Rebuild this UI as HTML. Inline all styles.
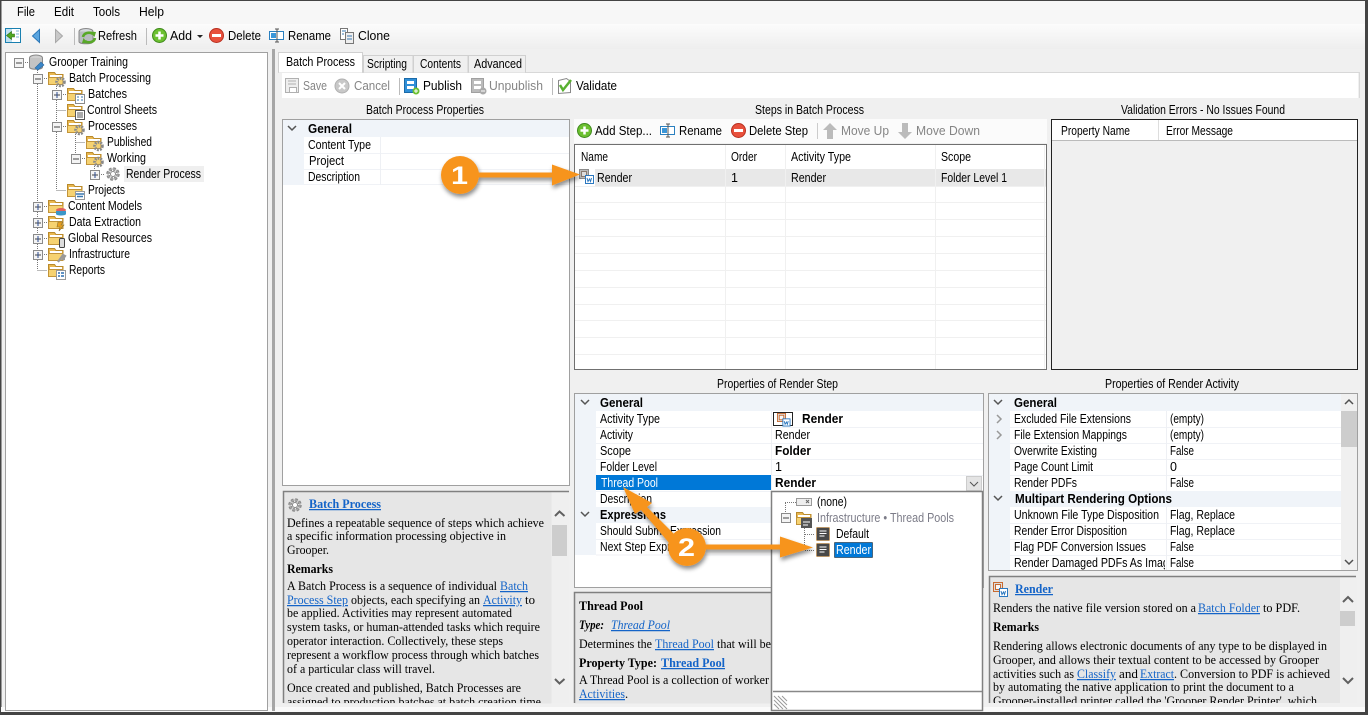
<!DOCTYPE html>
<html><head><meta charset="utf-8"><title>Grooper</title>
<style>
html,body{margin:0;padding:0;background:#f0f0f0;width:1368px;height:715px;overflow:hidden}
svg{display:block;position:absolute;left:0;top:0}
text{font-family:"Liberation Sans",sans-serif;font-size:12.5px;fill:#000;white-space:pre}
.b{font-weight:bold;fill:#000}
.g{fill:#858585}
.s{font-family:"Liberation Serif",serif;font-size:12.5px;fill:#000}
.sb{font-family:"Liberation Serif",serif;font-size:12.5px;font-weight:bold;fill:#000}
.l{font-family:"Liberation Serif",serif;font-size:12.5px;fill:#1464c8;text-decoration:underline}
.lb{font-family:"Liberation Serif",serif;font-size:12.5px;font-weight:bold;fill:#1464c8;text-decoration:underline}
.li{font-family:"Liberation Serif",serif;font-size:12.5px;font-style:italic;fill:#1464c8;text-decoration:underline}
.n{font-size:25px;font-weight:bold;fill:#fff}
</style></head><body>
<svg width="1368" height="715" viewBox="0 0 1368 715" xmlns="http://www.w3.org/2000/svg">
<defs>
<linearGradient id="tb" x1="0" y1="0" x2="0" y2="1"><stop offset="0" stop-color="#fcfcfc"/><stop offset="1" stop-color="#eeeeee"/></linearGradient>
<filter id="ds" x="-30%" y="-30%" width="170%" height="170%"><feDropShadow dx="1" dy="3" stdDeviation="2" flood-color="#000" flood-opacity=".45"/></filter>
<clipPath id="c1"><rect x="284" y="492" width="268" height="211"/></clipPath>
<clipPath id="c2"><rect x="990" y="577" width="350" height="126"/></clipPath>
<clipPath id="c3"><rect x="1012" y="555" width="153" height="15"/></clipPath>
<g id="fold"><path d="M.5 3.5V1.500h6l1.500 2h7v3h-14.500z" fill="#e9b850" stroke="#b98a2c"/><rect x="2" y="4" width="12" height="5" fill="#fff"/><path d="M.5 13.500V6.500h14.500v7z" fill="#f6d271" stroke="#c2943a"/></g>
<g id="fo1"><use href="#fold"/><circle cx="12.500" cy="11" r="3.800" fill="none" stroke="#8a8a8a" stroke-width="3" stroke-dasharray="1.800 1"/></g>
<g id="fo2"><use href="#fold"/><rect x="8.500" y="7.500" width="9" height="9" fill="#fff" stroke="#8a8a8a"/><path d="M10 10h2M14 10h2M10 13h2M14 13h2" stroke="#3a78b0"/></g>
<g id="fo3"><use href="#fold"/><rect x="8.500" y="7.500" width="9" height="9" fill="#fff" stroke="#555"/><path d="M10 10h6M10 12h6M10 14h6" stroke="#555"/></g>
<g id="fo4"><use href="#fold"/><rect x="8.500" y="8.500" width="9" height="8" fill="#fff" stroke="#999"/><path d="M9 11h8M10 13.500h6" stroke="#3a78b0" stroke-width="1.500"/></g>
<g id="fo5"><use href="#fold"/><ellipse cx="13" cy="11" rx="5" ry="2" fill="#e06060"/><path d="M8 12v3c0 2 10 2 10 0v-3" fill="#3a96c8"/></g>
<g id="fo6"><use href="#fold"/><path d="M10 7l5 0-2 3h3l-5 6 1-4h-3z" fill="#e8a020" stroke="#8a7030" stroke-width=".6"/></g>
<g id="fo7"><use href="#fold"/><rect x="11.500" y="7.500" width="5" height="9" rx="1" fill="#ddd" stroke="#444"/></g>
<g id="fo8"><use href="#fold"/><path d="M10 15l5-7 2 1-2 3 2 0" fill="none" stroke="#999" stroke-width="2.200"/></g>
<g id="fo9"><use href="#fold"/><rect x="8.500" y="7.500" width="9" height="9" fill="#fff" stroke="#999"/><path d="M10 10h2M13 10h3M10 13h2M13 13h3" stroke="#2b6fb0" stroke-width="1.500"/></g>
<g id="pm"><rect x=".5" y=".5" width="9" height="9" fill="#f4f4f4" stroke="#8a8a8a"/><path d="M2 5h6" stroke="#444"/></g>
<g id="pp"><use href="#pm"/><path d="M5 2v6" stroke="#2a4a90"/></g>
<g id="gear"><circle cx="8" cy="8" r="5" fill="none" stroke="#8a8a8a" stroke-width="3.500" stroke-dasharray="2.400 1.530"/><circle cx="8" cy="8" r="5" fill="none" stroke="#aaa" stroke-width="1"/><circle cx="8" cy="8" r="2.500" fill="#fff" stroke="#888"/></g>
<g id="add"><circle cx="7.500" cy="7.500" r="7" fill="#6cc030" stroke="#3f8a1c"/><path d="M7.500 3.500v8M3.500 7.500h8" stroke="#fff" stroke-width="2.500"/></g>
<g id="del"><circle cx="7.500" cy="7.500" r="7" fill="#e8503c" stroke="#b83020"/><path d="M3 7.500h9" stroke="#fff" stroke-width="3"/></g>
<g id="ren"><rect x=".5" y="3.500" width="14" height="8" fill="#fff" stroke="#2a80c0"/><rect x="2" y="5" width="5" height="5" fill="#3a96d8"/><path d="M8 1v13M6 1h4M6 14h4" stroke="#555" fill="none"/></g>
<g id="cpu"><rect x=".5" y=".5" width="13" height="13" fill="#484848" stroke="#d08a30" stroke-dasharray="1 1"/><path d="M3.500 4h7M3.500 6.500h7M3.500 9h5" stroke="#fff"/></g>
<g id="rnd"><rect x=".5" y=".5" width="9" height="9" fill="#ddd" stroke="#c86a30"/><rect x="2.500" y="2.500" width="5" height="5" fill="#f7f7f7" stroke="#c86a30"/><rect x="6.500" y="6.500" width="8" height="8" fill="#fff" stroke="#2b78c0"/><path d="M8 9l1 3.500 1.500-2.500 1 2.500 1-3.500" fill="none" stroke="#2b78c0"/></g>
<g id="rng"><rect x=".5" y=".5" width="9" height="9" fill="#bbb" stroke="#8a8a8a"/><rect x="2.500" y="2.500" width="5" height="5" fill="#ddd" stroke="#8a7a70"/><rect x="6.500" y="6.500" width="8" height="8" fill="#fff" stroke="#2b78c0"/><path d="M8 9l1 3.500 1.500-2.500 1 2.500 1-3.500" fill="none" stroke="#2b78c0"/></g>
</defs>

<!-- frame -->
<rect width="1368" height="715" fill="#f0f0f0"/>
<rect x="1" y="1" width="1364" height="23" fill="#f7f7f7"/>
<rect x="1" y="24" width="1364" height="25" fill="url(#tb)"/>
<rect y="0" width="1368" height="1" fill="#444"/>
<rect x="0" y="0" width="1.500" height="715" fill="#444"/>
<rect x="1365" y="0" width="3" height="715" fill="#444"/>
<rect y="712" width="1368" height="3" fill="#444"/>
<rect x="1" y="707" width="1364" height="5" fill="#fafafa"/>

<!-- menu -->
<text x="17" y="16" textLength="18" lengthAdjust="spacingAndGlyphs">File</text>
<text x="54" y="16" textLength="20" lengthAdjust="spacingAndGlyphs">Edit</text>
<text x="93" y="16" textLength="27" lengthAdjust="spacingAndGlyphs">Tools</text>
<text x="139" y="16" textLength="25" lengthAdjust="spacingAndGlyphs">Help</text>

<!-- main toolbar -->
<rect x="5.500" y="28.500" width="15" height="14" fill="#fff" stroke="#1a80b0"/><rect x="6" y="29" width="6" height="13" fill="#bfe0f0"/><path d="M6.500 35.500l5-4v2.500h3v3h-3v2.500z" fill="#50a820" stroke="#2c7010" stroke-width=".6"/><path d="M16 31h3M16 34h3M16 37h3" stroke="#7ab0d0"/>
<path d="M39.500 29.500v13l-7-6.500z" fill="#5aa5e0" stroke="#2c78b8"/>
<path d="M55.500 29.500v13l7-6.500z" fill="#c8c8c8" stroke="#a8a8a8"/>
<rect x="74" y="28" width="1" height="17" fill="#bbb"/>
<ellipse cx="86" cy="31.500" rx="7" ry="3" fill="#d4d8dc" stroke="#888"/><path d="M79 31.500v10c0 3 14 3 14 0v-10" fill="#b8bcc0" stroke="#888"/>
<path d="M83 37a6 5 0 0 1 10-3" fill="none" stroke="#58a828" stroke-width="2.600"/><path d="M90 31.500l6 .5-1.500 5z" fill="#58a828"/>
<path d="M95 38a6 5 0 0 1-10 3" fill="none" stroke="#58a828" stroke-width="2.600"/><path d="M88 43.500l-6-.5 1.500-5z" fill="#58a828"/>
<text x="98" y="40" textLength="39" lengthAdjust="spacingAndGlyphs">Refresh</text>
<rect x="146" y="28" width="1" height="17" fill="#bbb"/>
<use href="#add" x="152" y="28"/>
<text x="170" y="40" textLength="22" lengthAdjust="spacingAndGlyphs">Add</text>
<path d="M197 35h6l-3 3z" fill="#222"/>
<use href="#del" x="209" y="28"/>
<text x="228" y="40" textLength="33" lengthAdjust="spacingAndGlyphs">Delete</text>
<use href="#ren" x="269" y="28"/>
<text x="288" y="40" textLength="43" lengthAdjust="spacingAndGlyphs">Rename</text>
<rect x="340.500" y="28.500" width="7" height="11" fill="#fff" stroke="#777"/><rect x="345.500" y="32.500" width="8" height="11" fill="#eee" stroke="#777"/><path d="M342 31h4M342 34h2M347 36h5M347 39h5" stroke="#3a78b0"/>
<text x="358" y="40" textLength="32" lengthAdjust="spacingAndGlyphs">Clone</text>

<!-- tree panel -->
<rect x="5.500" y="52.500" width="262" height="658" fill="#fff" stroke="#a0a0a0"/>
<rect x="272" y="49" width="3" height="662" fill="#a6a6a6"/>
<g stroke="#777" stroke-dasharray="1 1" fill="none">
<path d="M23 62.500h6M37.500 68v202M42 78.500h6M42 206.500h6M42 222.500h6M42 238.500h6M42 254.500h6M37.500 270.500h10M56.500 84v106M61 94.500h6M56.500 110.500h10M61 126.500h6M56.500 190.500h10M75.500 132v26M75.500 142.500h10M80 158.500h6M94.500 164v10M99 174.500h5"/>
</g>
<use href="#pm" x="14" y="58"/><use href="#pm" x="33" y="74"/><use href="#pp" x="52" y="90"/><use href="#pm" x="52" y="122"/><use href="#pm" x="71" y="154"/><use href="#pp" x="90" y="170"/>
<use href="#pp" x="33" y="202"/><use href="#pp" x="33" y="218"/><use href="#pp" x="33" y="234"/><use href="#pp" x="33" y="250"/>
<ellipse cx="36" cy="58" rx="6.500" ry="3" fill="#d0d0d0" stroke="#888"/><path d="M29.500 58v9c0 3 13 3 13 0v-9" fill="#c4c4c4" stroke="#888"/><path d="M35 68l6-6 3 3-6 5z" fill="#3a86c8" stroke="#2a68a0" stroke-width=".6"/>
<use href="#fo1" x="48" y="71"/><use href="#fo2" x="67" y="87"/><use href="#fo3" x="67" y="103"/><use href="#fo1" x="67" y="119"/><use href="#fo1" x="86" y="135"/><use href="#fo1" x="86" y="151"/><use href="#gear" x="105" y="166"/><use href="#fo4" x="67" y="183"/>
<use href="#fo5" x="48" y="199"/><use href="#fo6" x="48" y="215"/><use href="#fo7" x="48" y="231"/><use href="#fo8" x="48" y="247"/><use href="#fo9" x="48" y="263"/>
<rect x="124" y="166" width="80" height="16" fill="#efefef"/>
<text x="49" y="66" textLength="79" lengthAdjust="spacingAndGlyphs">Grooper Training</text>
<text x="69" y="82" textLength="82" lengthAdjust="spacingAndGlyphs">Batch Processing</text>
<text x="88" y="98" textLength="39" lengthAdjust="spacingAndGlyphs">Batches</text>
<text x="87" y="114" textLength="70" lengthAdjust="spacingAndGlyphs">Control Sheets</text>
<text x="88" y="130" textLength="49" lengthAdjust="spacingAndGlyphs">Processes</text>
<text x="107" y="146" textLength="45" lengthAdjust="spacingAndGlyphs">Published</text>
<text x="107" y="162" textLength="39" lengthAdjust="spacingAndGlyphs">Working</text>
<text x="126" y="178" textLength="75" lengthAdjust="spacingAndGlyphs">Render Process</text>
<text x="88" y="194" textLength="37" lengthAdjust="spacingAndGlyphs">Projects</text>
<text x="68" y="210" textLength="74" lengthAdjust="spacingAndGlyphs">Content Models</text>
<text x="69" y="226" textLength="72" lengthAdjust="spacingAndGlyphs">Data Extraction</text>
<text x="68" y="242" textLength="84" lengthAdjust="spacingAndGlyphs">Global Resources</text>
<text x="69" y="258" textLength="61" lengthAdjust="spacingAndGlyphs">Infrastructure</text>
<text x="69" y="274" textLength="36" lengthAdjust="spacingAndGlyphs">Reports</text>

<!-- tabs -->
<rect x="278" y="72" width="1081" height="1" fill="#d8d8d8"/>
<rect x="1359" y="72" width="1" height="26" fill="#d8d8d8"/>
<rect x="282" y="73" width="1076" height="25" fill="#fff"/>
<path d="M278.500 72.500v-20h84v20" fill="#fff" stroke="#d0d0d0"/>
<path d="M363.500 72.500v-17h49.500v17M413.500 72.500v-17h54.500v17M468.500 72.500v-17h57v17" fill="#f0f0f0" stroke="#d0d0d0"/>
<text x="286" y="66" textLength="69" lengthAdjust="spacingAndGlyphs">Batch Process</text>
<text x="367" y="68" textLength="40" lengthAdjust="spacingAndGlyphs">Scripting</text>
<text x="420" y="68" textLength="41" lengthAdjust="spacingAndGlyphs">Contents</text>
<text x="474" y="68" textLength="48" lengthAdjust="spacingAndGlyphs">Advanced</text>

<!-- process toolbar -->
<rect x="285.500" y="78.500" width="13" height="14" fill="#eee" stroke="#b0b0b0"/><path d="M288 81h8M288 84h8" stroke="#b0b0b0"/><rect x="289.500" y="87.500" width="7" height="5" fill="#fff" stroke="#b0b0b0"/>
<text class="g" x="303" y="90" textLength="24" lengthAdjust="spacingAndGlyphs">Save</text>
<circle cx="342" cy="86" r="7" fill="#c8c8c8" stroke="#b0b0b0"/><path d="M339 83l6 6M345 83l-6 6" stroke="#fff" stroke-width="2"/>
<text class="g" x="354" y="90" textLength="36" lengthAdjust="spacingAndGlyphs">Cancel</text>
<rect x="399" y="78" width="1" height="17" fill="#bbb"/>
<rect x="404.500" y="78.500" width="12" height="14" fill="#2f8fd8" stroke="#1b6aa8"/><rect x="407" y="81" width="7" height="3" fill="#fff"/><rect x="407" y="86" width="7" height="3" fill="#fff"/><circle cx="416" cy="91" r="3.500" fill="#6cc030"/><path d="M416 89v4M414 91h4" stroke="#fff"/>
<text x="423" y="90" textLength="39" lengthAdjust="spacingAndGlyphs">Publish</text>
<rect x="471.500" y="78.500" width="12" height="14" fill="#bbb" stroke="#a0a0a0"/><rect x="474" y="81" width="7" height="3" fill="#fff"/><rect x="474" y="86" width="7" height="3" fill="#fff"/><circle cx="483" cy="91" r="3.500" fill="#aaa"/><path d="M481 91h4" stroke="#fff"/>
<text class="g" x="489" y="90" textLength="54" lengthAdjust="spacingAndGlyphs">Unpublish</text>
<rect x="552" y="78" width="1" height="17" fill="#bbb"/>
<path d="M558.500 80.500l8-2 4 3v11l-12 1z" fill="#fff" stroke="#888"/><path d="M560 85l3 5 8-10" fill="none" stroke="#58b030" stroke-width="2.500"/>
<text x="576" y="90" textLength="41" lengthAdjust="spacingAndGlyphs">Validate</text>

<!-- headings -->
<text x="366" y="114" textLength="118" lengthAdjust="spacingAndGlyphs">Batch Process Properties</text>
<text x="755" y="114" textLength="109" lengthAdjust="spacingAndGlyphs">Steps in Batch Process</text>
<text x="1121" y="114" textLength="164" lengthAdjust="spacingAndGlyphs">Validation Errors - No Issues Found</text>
<text x="717" y="388" textLength="121" lengthAdjust="spacingAndGlyphs">Properties of Render Step</text>
<text x="1105" y="388" textLength="134" lengthAdjust="spacingAndGlyphs">Properties of Render Activity</text>

<!-- left property grid -->
<rect x="282.500" y="119.500" width="287" height="366" fill="#fff" stroke="#a0a0a0"/>
<rect x="283" y="120" width="286" height="17" fill="#f0f4f9"/>
<rect x="283" y="137" width="21" height="48" fill="#f0f4f9"/>
<path d="M304 153.500h265M304 169.500h265M304 184.500h265" stroke="#f0f2f6"/>
<path d="M380.500 137v48" stroke="#eef0f4"/>
<path d="M288 126l4 4 4-4" fill="none" stroke="#555" stroke-width="1.500"/>
<text class="b" x="308" y="133" textLength="44" lengthAdjust="spacingAndGlyphs">General</text>
<text x="308" y="149" textLength="63" lengthAdjust="spacingAndGlyphs">Content Type</text>
<text x="309" y="165" textLength="35" lengthAdjust="spacingAndGlyphs">Project</text>
<text x="308" y="181" textLength="52" lengthAdjust="spacingAndGlyphs">Description</text>

<!-- left help -->
<rect x="283" y="491" width="286" height="212" fill="#efefef"/>
<rect x="283.500" y="491.500" width="268" height="212" fill="#e6e6e6"/>
<path d="M283.500 703V491.500H569" fill="none" stroke="#808080" stroke-width="1.500"/>
<rect x="552" y="525" width="15" height="31" fill="#cdcdcd"/>
<path d="M555 516l4.500-4.500 5 4.500M555 679l4.500 4.500 5-4.500" fill="none" stroke="#606060" stroke-width="2"/>
<use href="#gear" x="287" y="497"/>
<g clip-path="url(#c1)">
<text class="lb" x="309" y="508" textLength="72" lengthAdjust="spacingAndGlyphs">Batch Process</text>
<text class="s" x="287" y="527" textLength="257" lengthAdjust="spacingAndGlyphs">Defines a repeatable sequence of steps which achieve</text>
<text class="s" x="287" y="540" textLength="219" lengthAdjust="spacingAndGlyphs">a specific information processing objective in</text>
<text class="s" x="287" y="554" textLength="42" lengthAdjust="spacingAndGlyphs">Grooper.</text>
<text class="sb" x="287" y="573" textLength="46" lengthAdjust="spacingAndGlyphs">Remarks</text>
<text class="s" x="287" y="590" textLength="210" lengthAdjust="spacingAndGlyphs">A Batch Process is a sequence of individual</text>
<text class="l" x="500" y="590" textLength="28" lengthAdjust="spacingAndGlyphs">Batch</text>
<text class="l" x="287" y="604" textLength="61" lengthAdjust="spacingAndGlyphs">Process Step</text>
<text class="s" x="351" y="604" textLength="129" lengthAdjust="spacingAndGlyphs">objects, each specifying an</text>
<text class="l" x="483" y="604" textLength="39" lengthAdjust="spacingAndGlyphs">Activity</text>
<text class="s" x="525" y="604" textLength="10" lengthAdjust="spacingAndGlyphs">to</text>
<text class="s" x="287" y="617" textLength="225" lengthAdjust="spacingAndGlyphs">be applied. Activities may represent automated</text>
<text class="s" x="287" y="631" textLength="253" lengthAdjust="spacingAndGlyphs">system tasks, or human-attended tasks which require</text>
<text class="s" x="287" y="645" textLength="216" lengthAdjust="spacingAndGlyphs">operator interaction. Collectively, these steps</text>
<text class="s" x="287" y="659" textLength="252" lengthAdjust="spacingAndGlyphs">represent a workflow process through which batches</text>
<text class="s" x="287" y="673" textLength="148" lengthAdjust="spacingAndGlyphs">of a particular class will travel.</text>
<text class="s" x="287" y="692" textLength="234" lengthAdjust="spacingAndGlyphs">Once created and published, Batch Processes are</text>
<text class="s" x="287" y="706" textLength="254" lengthAdjust="spacingAndGlyphs">assigned to production batches at batch creation time</text>
</g>

<!-- steps toolbar -->
<rect x="574" y="119" width="473" height="24" fill="#fbfbfb"/>
<use href="#add" x="577" y="123"/>
<text x="595" y="135" textLength="57" lengthAdjust="spacingAndGlyphs">Add Step...</text>
<use href="#ren" x="660" y="123"/>
<text x="679" y="135" textLength="43" lengthAdjust="spacingAndGlyphs">Rename</text>
<use href="#del" x="731" y="123"/>
<text x="749" y="135" textLength="59" lengthAdjust="spacingAndGlyphs">Delete Step</text>
<rect x="817" y="123" width="1" height="16" fill="#ccc"/>
<path d="M830 123l7 7h-4v9h-6v-9h-4z" fill="#bbb"/>
<text class="g" x="841" y="135" textLength="48" lengthAdjust="spacingAndGlyphs">Move Up</text>
<path d="M905 139l7-7h-4v-9h-6v9h-4z" fill="#bbb"/>
<text class="g" x="916" y="135" textLength="64" lengthAdjust="spacingAndGlyphs">Move Down</text>

<!-- steps list -->
<rect x="574.500" y="144.500" width="472" height="225" fill="#fff" stroke="#707070"/>
<rect x="575" y="169" width="471" height="17" fill="#e8e8e8"/>
<path d="M575 186.500h471M575 202.500h471M575 219.500h471M575 236.500h471M575 253.500h471M575 270.500h471M575 287.500h471M575 304.500h471M575 320.500h471M575 337.500h471M575 354.500h471" stroke="#f0f0f0"/>
<path d="M725.500 145v224M785.500 145v224M935.500 145v224M1044.500 145v224" stroke="#f0f0f0"/>
<rect x="575" y="169" width="20" height="17" fill="#fff"/>
<use href="#rng" x="579" y="169"/>
<text x="581" y="161" textLength="27" lengthAdjust="spacingAndGlyphs">Name</text>
<text x="731" y="161" textLength="26" lengthAdjust="spacingAndGlyphs">Order</text>
<text x="791" y="161" textLength="60" lengthAdjust="spacingAndGlyphs">Activity Type</text>
<text x="941" y="161" textLength="30" lengthAdjust="spacingAndGlyphs">Scope</text>
<text x="597" y="182" textLength="35" lengthAdjust="spacingAndGlyphs">Render</text>
<text x="731" y="182">1</text>
<text x="791" y="182" textLength="35" lengthAdjust="spacingAndGlyphs">Render</text>
<text x="941" y="182" textLength="66" lengthAdjust="spacingAndGlyphs">Folder Level 1</text>

<!-- validation -->
<rect x="1051.500" y="119.500" width="306" height="250" fill="#f0f0f0" stroke="#222"/>
<rect x="1052" y="120" width="305" height="20" fill="#fff"/>
<path d="M1052 140.500h305" stroke="#bbb"/><path d="M1158.500 120v20" stroke="#ddd"/>
<text x="1061" y="135" textLength="69" lengthAdjust="spacingAndGlyphs">Property Name</text>
<text x="1166" y="135" textLength="67" lengthAdjust="spacingAndGlyphs">Error Message</text>

<!-- render step grid -->
<rect x="574.500" y="393.500" width="409" height="194" fill="#fff" stroke="#a0a0a0"/>
<rect x="575" y="394" width="408" height="17" fill="#f0f4f9"/>
<rect x="575" y="411" width="21" height="96" fill="#f0f4f9"/>
<rect x="575" y="507" width="408" height="16" fill="#f0f4f9"/>
<rect x="575" y="523" width="21" height="32" fill="#f0f4f9"/>
<path d="M596 427.500h387M596 443.500h387M596 459.500h387M596 475.500h387M596 491.500h387M596 539.500h175M596 555h175" stroke="#f0f2f6"/>
<path d="M771.500 411v96M771.500 523v32" stroke="#eef0f4"/>
<path d="M581 400l4 4 4-4M581 512l4 4 4-4" fill="none" stroke="#555" stroke-width="1.500"/>
<rect x="596" y="475" width="175" height="15" fill="#0078d7"/>
<text class="b" x="600" y="407" textLength="43" lengthAdjust="spacingAndGlyphs">General</text>
<text x="600" y="423" textLength="60" lengthAdjust="spacingAndGlyphs">Activity Type</text>
<text x="600" y="439" textLength="33" lengthAdjust="spacingAndGlyphs">Activity</text>
<text x="600" y="455" textLength="31" lengthAdjust="spacingAndGlyphs">Scope</text>
<text x="600" y="471" textLength="57" lengthAdjust="spacingAndGlyphs">Folder Level</text>
<text x="601" y="487" textLength="57" lengthAdjust="spacingAndGlyphs" style="fill:#fff">Thread Pool</text>
<text x="600" y="503" textLength="52" lengthAdjust="spacingAndGlyphs">Description</text>
<text class="b" x="600" y="519" textLength="66" lengthAdjust="spacingAndGlyphs">Expressions</text>
<text x="600" y="535" textLength="121" lengthAdjust="spacingAndGlyphs">Should Submit Expression</text>
<text x="600" y="551" textLength="101" lengthAdjust="spacingAndGlyphs">Next Step Expression</text>
<rect x="773.500" y="412.500" width="19" height="13" fill="#fff" stroke="#222"/>
<use href="#rnd" x="777" y="413" transform="translate(77.700 41.300) scale(.9)"/>
<text class="b" x="802" y="423" textLength="41" lengthAdjust="spacingAndGlyphs">Render</text>
<text x="775" y="439" textLength="35" lengthAdjust="spacingAndGlyphs">Render</text>
<text class="b" x="775" y="455" textLength="36" lengthAdjust="spacingAndGlyphs">Folder</text>
<text x="775" y="471">1</text>
<text class="b" x="775" y="487" textLength="41" lengthAdjust="spacingAndGlyphs">Render</text>
<rect x="966.500" y="476.500" width="15" height="14" fill="#e4e4e4" stroke="#ccc"/>
<path d="M970 482l4 4 4-4" fill="none" stroke="#555"/>

<!-- thread help -->
<rect x="574.500" y="592.500" width="210" height="111" fill="#e6e6e6"/>
<path d="M574.500 703V592.500H785" fill="none" stroke="#808080" stroke-width="1.500"/>
<text class="sb" x="579" y="610" textLength="64" lengthAdjust="spacingAndGlyphs">Thread Pool</text>
<text class="sb" x="579" y="629" textLength="25" lengthAdjust="spacingAndGlyphs" style="font-style:italic">Type:</text>
<text class="li" x="611" y="629" textLength="59" lengthAdjust="spacingAndGlyphs">Thread Pool</text>
<text class="s" x="579" y="648" textLength="73" lengthAdjust="spacingAndGlyphs">Determines the</text>
<text class="l" x="655" y="648" textLength="59" lengthAdjust="spacingAndGlyphs">Thread Pool</text>
<text class="s" x="717" y="648" textLength="54" lengthAdjust="spacingAndGlyphs">that will be</text>
<text class="sb" x="579" y="667" textLength="78" lengthAdjust="spacingAndGlyphs">Property Type:</text>
<text class="lb" x="661" y="667" textLength="64" lengthAdjust="spacingAndGlyphs">Thread Pool</text>
<text class="s" x="579" y="684" textLength="190" lengthAdjust="spacingAndGlyphs">A Thread Pool is a collection of worker</text>
<text class="l" x="579" y="698" textLength="46" lengthAdjust="spacingAndGlyphs">Activities</text>
<text class="s" x="625" y="698">.</text>

<!-- dropdown popup -->
<rect x="771.500" y="491.500" width="211" height="219" fill="#fff" stroke="#808080" stroke-width="1.500"/>
<path d="M773 691.500h209" stroke="#888" stroke-width="1.500"/>
<path d="M774 696l13 13M774 700l9 9M774 704l5 5M778 696l9 9M782 696l5 5" stroke="#999"/>
<g stroke="#777" stroke-dasharray="1 1" fill="none"><path d="M785 502.500h11M785.500 503v11M804.500 524v26M805 534.500h10M805 550.500h10"/></g>
<rect x="796.500" y="498.500" width="15" height="7" fill="#eee" stroke="#999"/><path d="M806 500l3 3M809 500l-3 3" stroke="#666"/>
<use href="#pm" x="781" y="513"/>
<use href="#fold" x="796" y="511"/><rect x="801" y="518" width="11" height="10" fill="#555"/><path d="M803 522h7M803 525h5" stroke="#fff"/>
<use href="#cpu" x="816" y="527"/><use href="#cpu" x="816" y="543"/>
<rect x="834.500" y="542.500" width="38" height="15" fill="#0078d7" stroke="#111" stroke-dasharray="1 1"/>
<text x="817" y="506" textLength="30" lengthAdjust="spacingAndGlyphs">(none)</text>
<text x="817" y="522" textLength="137" lengthAdjust="spacingAndGlyphs" style="fill:#7c7c88">Infrastructure • Thread Pools</text>
<text x="836" y="538" textLength="33" lengthAdjust="spacingAndGlyphs">Default</text>
<text x="836" y="554" textLength="35" lengthAdjust="spacingAndGlyphs" style="fill:#fff">Render</text>

<!-- render activity grid -->
<rect x="988.500" y="393.500" width="369" height="177" fill="#fff" stroke="#a0a0a0"/>
<rect x="989" y="394" width="352" height="17" fill="#f0f4f9"/>
<rect x="989" y="411" width="21" height="159" fill="#f0f4f9"/>
<rect x="989" y="491" width="352" height="16" fill="#f0f4f9"/>
<path d="M1010 427.500h331M1010 443.500h331M1010 459.500h331M1010 475.500h331M1010 523.500h331M1010 539.500h331M1010 555.500h331" stroke="#f0f2f6"/>
<path d="M1166.500 411v80M1166.500 507v63" stroke="#eef0f4"/>
<rect x="1341" y="394" width="16" height="176" fill="#f0f0f0"/>
<rect x="1341" y="411" width="16" height="36" fill="#cdcdcd"/>
<path d="M1345 404l4-4 4 4M1345 560l4 4 4-4" fill="none" stroke="#505050" stroke-width="1.500"/>
<path d="M994 400l4 4 4-4M994 496l4 4 4-4" fill="none" stroke="#555" stroke-width="1.500"/>
<path d="M997 415l4 4-4 4M997 431l4 4-4 4" fill="none" stroke="#999" stroke-width="1.500"/>
<text class="b" x="1014" y="407" textLength="43" lengthAdjust="spacingAndGlyphs">General</text>
<text x="1014" y="423" textLength="117" lengthAdjust="spacingAndGlyphs">Excluded File Extensions</text>
<text x="1014" y="439" textLength="113" lengthAdjust="spacingAndGlyphs">File Extension Mappings</text>
<text x="1014" y="455" textLength="83" lengthAdjust="spacingAndGlyphs">Overwrite Existing</text>
<text x="1014" y="471" textLength="79" lengthAdjust="spacingAndGlyphs">Page Count Limit</text>
<text x="1014" y="487" textLength="63" lengthAdjust="spacingAndGlyphs">Render PDFs</text>
<text class="b" x="1015" y="503" textLength="157" lengthAdjust="spacingAndGlyphs">Multipart Rendering Options</text>
<text x="1014" y="519" textLength="145" lengthAdjust="spacingAndGlyphs">Unknown File Type Disposition</text>
<text x="1014" y="535" textLength="113" lengthAdjust="spacingAndGlyphs">Render Error Disposition</text>
<text x="1014" y="551" textLength="132" lengthAdjust="spacingAndGlyphs">Flag PDF Conversion Issues</text>
<g clip-path="url(#c3)"><text x="1014" y="567" textLength="166" lengthAdjust="spacingAndGlyphs">Render Damaged PDFs As Images</text></g>
<text x="1170" y="423" textLength="34" lengthAdjust="spacingAndGlyphs">(empty)</text>
<text x="1170" y="439" textLength="34" lengthAdjust="spacingAndGlyphs">(empty)</text>
<text x="1170" y="455" textLength="24" lengthAdjust="spacingAndGlyphs">False</text>
<text x="1170" y="471">0</text>
<text x="1170" y="487" textLength="24" lengthAdjust="spacingAndGlyphs">False</text>
<text x="1170" y="519" textLength="65" lengthAdjust="spacingAndGlyphs">Flag, Replace</text>
<text x="1170" y="535" textLength="65" lengthAdjust="spacingAndGlyphs">Flag, Replace</text>
<text x="1170" y="551" textLength="24" lengthAdjust="spacingAndGlyphs">False</text>
<text x="1170" y="567" textLength="24" lengthAdjust="spacingAndGlyphs">False</text>

<!-- render help -->
<rect x="989" y="576" width="368" height="127" fill="#efefef"/>
<rect x="989" y="576" width="351" height="127" fill="#e6e6e6"/>
<path d="M989.500 703V576.500H1356" fill="none" stroke="#808080" stroke-width="1.500"/>
<rect x="1340" y="611" width="15" height="15" fill="#cdcdcd"/>
<path d="M1343 602l5-5 5 5M1343 678l5 5 5-5" fill="none" stroke="#606060" stroke-width="2"/>
<use href="#rnd" x="993" y="582"/>
<g clip-path="url(#c2)">
<text class="lb" x="1015" y="593" textLength="38" lengthAdjust="spacingAndGlyphs">Render</text>
<text class="s" x="993" y="612" textLength="203" lengthAdjust="spacingAndGlyphs">Renders the native file version stored on a</text>
<text class="l" x="1198" y="612" textLength="62" lengthAdjust="spacingAndGlyphs">Batch Folder</text>
<text class="s" x="1263" y="612" textLength="37" lengthAdjust="spacingAndGlyphs">to PDF.</text>
<text class="sb" x="993" y="631" textLength="46" lengthAdjust="spacingAndGlyphs">Remarks</text>
<text class="s" x="993" y="650" textLength="334" lengthAdjust="spacingAndGlyphs">Rendering allows electronic documents of any type to be displayed in</text>
<text class="s" x="993" y="664" textLength="326" lengthAdjust="spacingAndGlyphs">Grooper, and allows their textual content to be accessed by Grooper</text>
<text class="s" x="993" y="678" textLength="81" lengthAdjust="spacingAndGlyphs">activities such as</text>
<text class="l" x="1077" y="678" textLength="39" lengthAdjust="spacingAndGlyphs">Classify</text>
<text class="s" x="1119" y="678" textLength="19" lengthAdjust="spacingAndGlyphs">and</text>
<text class="l" x="1140" y="678" textLength="34" lengthAdjust="spacingAndGlyphs">Extract</text>
<text class="s" x="1174" y="678" textLength="156" lengthAdjust="spacingAndGlyphs">. Conversion to PDF is achieved</text>
<text class="s" x="993" y="691" textLength="301" lengthAdjust="spacingAndGlyphs">by automating the native application to print the document to a</text>
<text class="s" x="993" y="705" textLength="324" lengthAdjust="spacingAndGlyphs">Grooper-installed printer called the 'Grooper Render Printer', which</text>
</g>

<!-- annotations -->
<g filter="url(#ds)" fill="#f7941d">
<path d="M470 172.500h82v-8l28 10-28 11v-8h-82z"/>
<circle cx="460" cy="175" r="19"/>
</g>
<text class="n" x="451" y="184" textLength="17" lengthAdjust="spacingAndGlyphs">1</text>
<g filter="url(#ds)" fill="#f7941d">
<path d="M623 487l29 16-5 4 31 31-8 6-29-34-6 4z"/>
<path d="M695 544.500h85v-8l33 11-33 10v-8h-85z"/>
<circle cx="687" cy="547" r="19"/>
</g>
<text class="n" x="678" y="556" textLength="17" lengthAdjust="spacingAndGlyphs">2</text>
</svg>
</body></html>
